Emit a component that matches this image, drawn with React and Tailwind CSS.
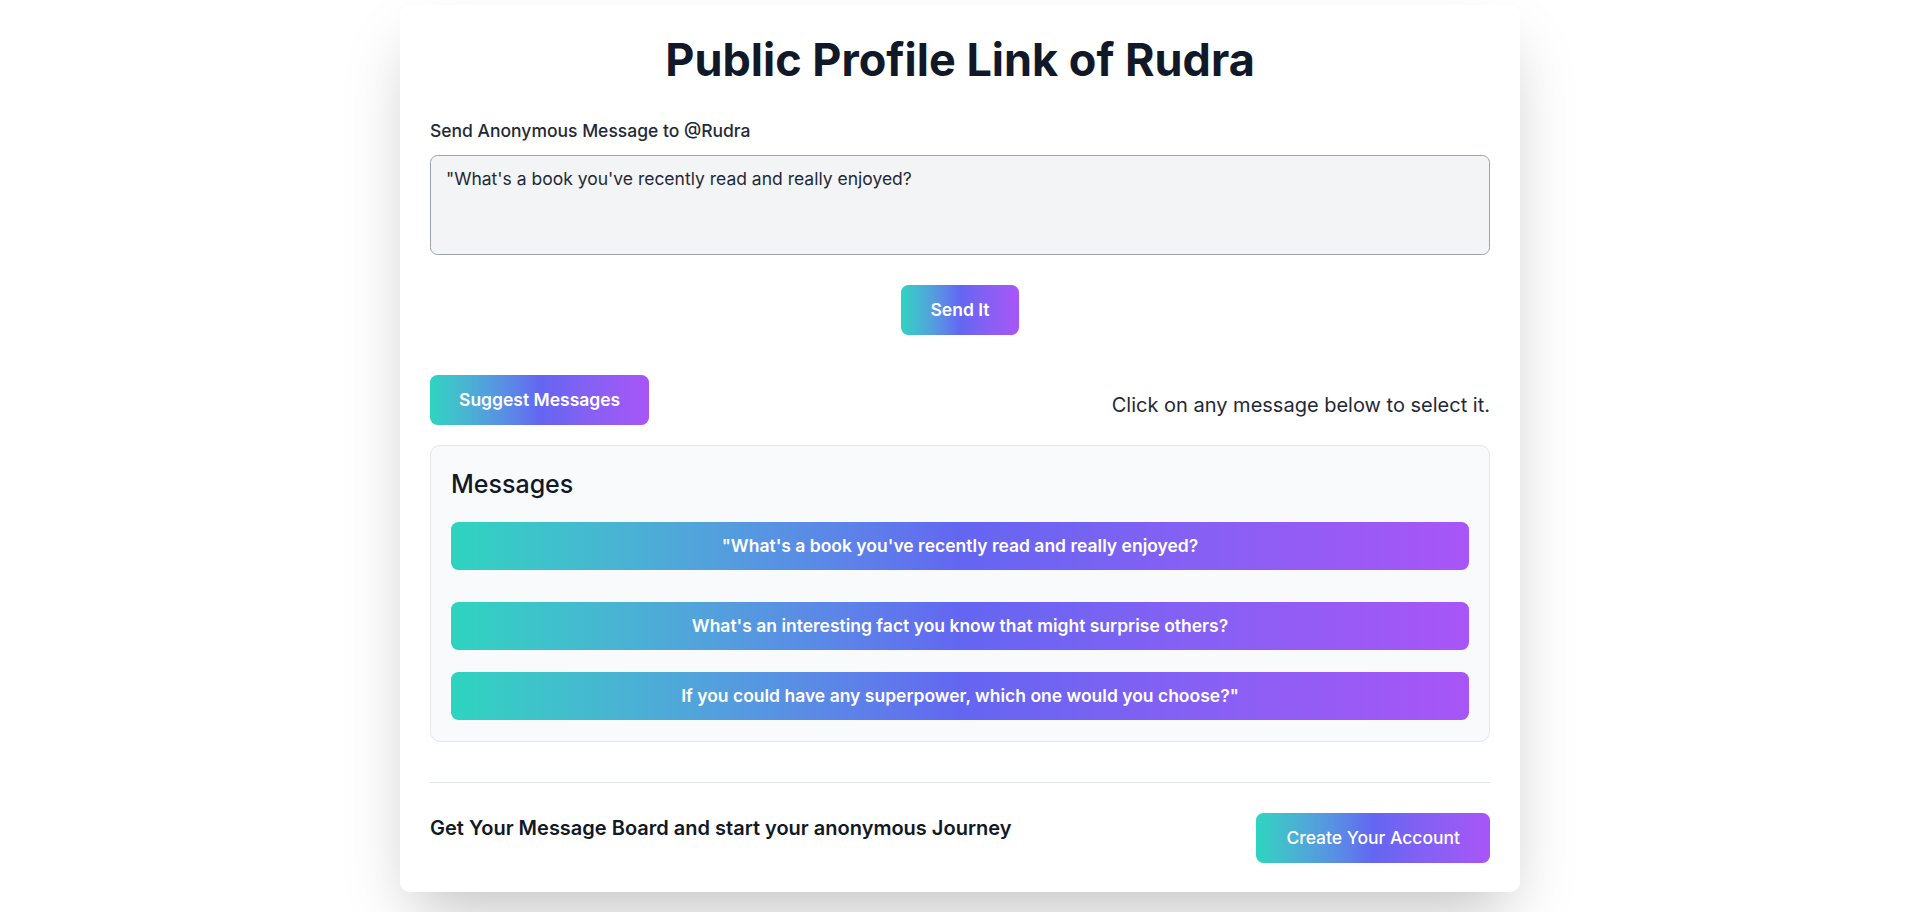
import React from "react";

const grad = "bg-gradient-to-r from-[#2dd4bf] via-[#6366f1] to-[#a855f7]";

const messages = [
  "\"What's a book you've recently read and really enjoyed?",
  "What's an interesting fact you know that might surprise others?",
  "If you could have any superpower, which one would you choose?\"",
];

export default function App() {
  return (
    <div className="min-h-screen bg-white pt-[5px] font-['Inter','Noto_Sans',sans-serif]">
      <div className="mx-auto w-[1120px] rounded-[10px] bg-white p-[30px] pb-[29px] shadow-[0_31px_62px_-15px_rgba(0,0,0,0.25)]">
        <h1 className="text-center text-[45px] font-bold leading-[50px] text-[#111827]">
          Public Profile Link of Rudra
        </h1>

        <div className="mt-[33px]">
          <label className="block text-[17.5px] font-medium leading-[25px] text-[#1f2937]">
            Send Anonymous Message to @Rudra
          </label>
          <textarea
            readOnly
            value={"\"What's a book you've recently read and really enjoyed?"}
            className="mt-[12px] block h-[100px] w-full resize-none rounded-[7.5px] border border-[#9ca3af] bg-[#f3f4f6] px-[15px] py-[10px] text-[17.5px] leading-[25px] text-[#1f2937] outline-none"
          />
        </div>

        <div className="mt-[30px] flex justify-center">
          <button className={`h-[50px] rounded-[7.5px] px-[29px] text-[17.5px] font-semibold text-white ${grad}`}>
            Send It
          </button>
        </div>

        <div className="mt-[40px] flex items-start justify-between">
          <button className={`h-[50px] rounded-[7.5px] px-[29px] text-[17.5px] font-semibold text-white ${grad}`}>
            Suggest Messages
          </button>
          <p className="pt-[15px] text-[20px] leading-[30px] text-[#1f2937]">
            Click on any message below to select it.
          </p>
        </div>

        <div className="mt-[20px] rounded-[10px] border border-[#e5e7eb] bg-[#f9fafb] px-[20px] pb-[21px] pt-[21px]">
          <h3 className="text-[25px] font-medium leading-[35px] text-[#111827]">Messages</h3>
          <div className="mt-[20px] flex flex-col">
            {messages.map((m, i) => (
              <button
                key={i}
                className={`h-[48px] w-full rounded-[7.5px] px-[20px] text-center text-[17.5px] font-semibold text-white ${grad} ${
                  i === 1 ? "mt-[32px]" : i === 2 ? "mt-[22px]" : ""
                }`}
              >
                {m}
              </button>
            ))}
          </div>
        </div>

        <div className="mt-[40px] h-px bg-[#e2e8f0]" />

        <div className="mt-[30px] flex items-start justify-between">
          <p className="text-[20px] font-semibold leading-[30px] text-[#111827]">
            Get Your Message Board and start your anonymous Journey
          </p>
          <button className={`h-[50px] rounded-[7.5px] px-[30px] text-[17.5px] font-medium text-white ${grad}`}>
            Create Your Account
          </button>
        </div>
      </div>
    </div>
  );
}
